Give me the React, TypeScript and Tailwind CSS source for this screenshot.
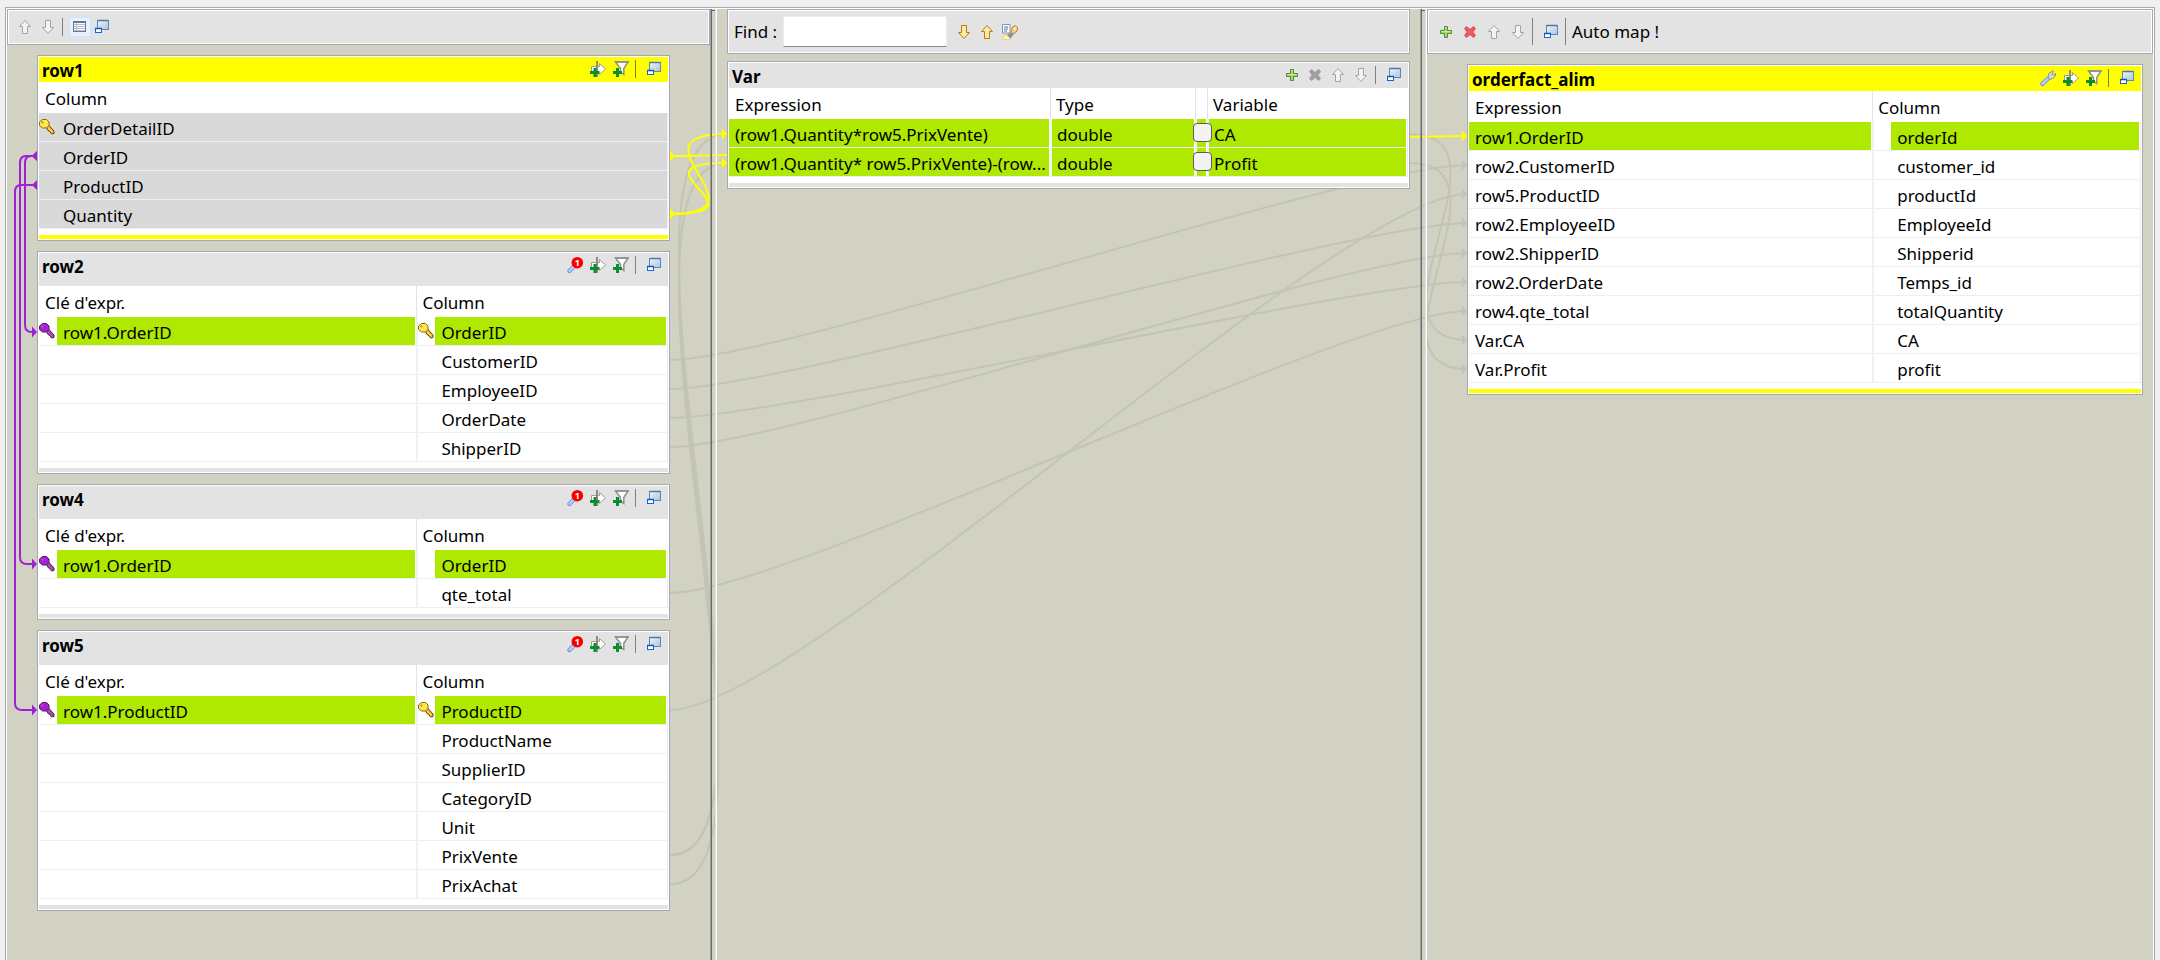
import type { ReactNode } from "react";

/* ---------- icons ---------- */

function Svg({ children, size = "size-4" }: { children: ReactNode; size?: string }) {
  return (
    <svg viewBox="0 0 16 16" className={`${size} block shrink-0`} aria-hidden="true">
      {children}
    </svg>
  );
}

const ARROW_UP = "M8 1.5 L13.5 7.5 L10.5 7.5 L10.5 14.5 L5.5 14.5 L5.5 7.5 L2.5 7.5 Z";
const ARROW_DOWN = "M8 14.5 L13.5 8.5 L10.5 8.5 L10.5 1.5 L5.5 1.5 L5.5 8.5 L2.5 8.5 Z";

function ArrowIcon({ dir, gold }: { dir: "up" | "down"; gold?: boolean }) {
  return (
    <Svg>
      <path
        d={dir === "up" ? ARROW_UP : ARROW_DOWN}
        fill={gold ? "#fde9a0" : "#f2f2f2"}
        stroke={gold ? "#b87a1e" : "#a3a3a3"}
        strokeLinejoin="round"
      />
    </Svg>
  );
}

function PlusIcon() {
  return (
    <Svg>
      <path
        d="M6.5 2.5h3v4h4v3h-4v4h-3v-4h-4v-3h4z"
        fill="#b9d34c"
        stroke="#3f8f52"
        strokeLinejoin="round"
      />
      <path d="M7 3.5h2M3.5 7.5h9" stroke="#dbe88c" />
    </Svg>
  );
}

function CrossIcon({ disabled }: { disabled?: boolean }) {
  return (
    <Svg>
      <path
        d="M2.5 4.5 L4.5 2.5 L8 5.5 L11.5 2.5 L13.5 4.5 L10.8 8 L13.5 11.5 L11.5 13.5 L8 10.5 L4.5 13.5 L2.5 11.5 L5.2 8 Z"
        fill={disabled ? "#a0a0a0" : "#f0595c"}
        stroke={disabled ? "#9a9a9a" : "#cf4a55"}
        strokeLinejoin="round"
      />
    </Svg>
  );
}

function RestoreIcon() {
  return (
    <Svg>
      <defs>
        <linearGradient id="pane" x1="0" y1="0" x2="1" y2="1">
          <stop offset="0" stopColor="#f4f4f2" />
          <stop offset="1" stopColor="#a9c4de" />
        </linearGradient>
      </defs>
      <rect x="3.5" y="1.5" width="11" height="9" fill="url(#pane)" stroke="#5a87bd" />
      <path d="M3.5 1.5h11" stroke="#4a78b5" strokeWidth="1.5" />
      <rect x="1.5" y="9.5" width="6" height="4" fill="#fff" stroke="#1565d0" />
      <path d="M1 9.5h7" stroke="#0b57c4" strokeWidth="1.5" />
    </Svg>
  );
}

function GridIcon() {
  return (
    <Svg>
      <rect x="1.5" y="2.5" width="12" height="10" fill="#fff" stroke="#6b7690" />
      <path d="M1 3h13" stroke="#6b7690" strokeWidth="2" />
      <path d="M2 5.5h11M2 7.5h11M2 9.5h11M4.5 4v8M2 11.5h11" stroke="#b5bccb" strokeWidth="1" />
    </Svg>
  );
}

function AddColumnIcon() {
  return (
    <Svg>
      <path d="M1.5 5.5h8v-3l6 5.5-6 5.5v-3h-8z" fill="#fff" stroke="#a29c8c" />
      <path d="M7 0v16" stroke="#8b8b8b" strokeWidth="2" />
      <path d="M5 7v9M0 11.5h9" stroke="#0a8f2c" strokeWidth="3" />
    </Svg>
  );
}

function AddFilterIcon() {
  return (
    <Svg>
      <path d="M2.5 1h12.5L10.8 7.5V13.5L7.5 11V7.5z" fill="#fff" stroke="#8f8f8f" strokeWidth="1.5" />
      <path d="M2 1h14" stroke="#8f8f8f" strokeWidth="1.5" />
      <path d="M4.5 7v9M0 11.5h9" stroke="#0a8f2c" strokeWidth="3" />
    </Svg>
  );
}

function WrenchIcon({ count }: { count?: number }) {
  return (
    <svg viewBox="0 0 16 16" className="block size-4 shrink-0 overflow-visible" aria-hidden="true">
      {count === undefined && (
        <path
          d="M8 8.5 L8.5 4 L12.5 0.8 L13.5 1.5 L12 4 L13.2 5.2 L15.6 3.5 L15.5 6 L12.5 8.5 L9.5 9.5 Z"
          fill="#d6d6d6"
          stroke="#8c8c8c"
        />
      )}
      <path d="M7.5 9 L2.4 14" stroke="#6c95d8" strokeWidth="4.4" strokeLinecap="round" />
      <path d="M7.5 9 L2.6 13.8" stroke="#b4cdf4" strokeWidth="2.6" strokeLinecap="round" />
      {count !== undefined && (
        <>
          <circle cx="10.3" cy="5.7" r="5.8" fill="#f80000" />
          <text
            x="10.3"
            y="9"
            fontSize="9"
            fontWeight="700"
            fontFamily="Noto Sans, sans-serif"
            textAnchor="middle"
            fill="#fff"
          >
            {count}
          </text>
        </>
      )}
    </svg>
  );
}

function FindTextIcon() {
  return (
    <Svg>
      <path d="M0.5 0.5h7.5v8.5h-7.5z" fill="#fff" stroke="#8291b5" />
      <path d="M2 3h4M2 5h4M2 7h3" stroke="#4f74b8" />
      <path d="M0.5 15.5 L2 11 L6 11.5 L8.5 15.5 Z" fill="#fff3bf" stroke="#e9c565" strokeWidth="0.7" />
      <path d="M5 11 L9 8 L11.5 10.5 L8.5 14.5 Z" fill="#8f8f9c" />
      <path d="M9 7 L10.5 3 L13.5 1.5 L15.7 3.5 L15 7 L11.5 10 Z" fill="#f6cf7c" stroke="#b9853a" />
      <path d="M12 4l1.5 1.5" stroke="#fff" strokeWidth="1.5" />
    </Svg>
  );
}

function KeyIcon({ tone }: { tone: "gold" | "purple" }) {
  const gold = tone === "gold";
  const fill = gold ? "#fce94a" : "#a421d6";
  const edge = gold ? "#8a6a12" : "#5b1a6e";
  const shaft = gold ? "#f5b524" : "#a83bb5";
  return (
    <Svg>
      <path
        d="M7 8 L9.5 6 L15 12 L15 14.5 L12.5 15 L11 12.5 L9.5 12 Z"
        fill={shaft}
        stroke={gold ? "#5e430c" : "#4d2a3c"}
        strokeLinejoin="round"
      />
      <path d="M9 8.5 L13.5 13.5" stroke={gold ? "#fff07a" : "#c05fc8"} />
      <path d="M3.5 .5h4l2.5 2.5v3.5l-2.5 2.5h-4l-3-2.5v-3.5z" fill={fill} stroke={edge} />
      <path d="M2 3.5h3M3.5 2v3" stroke={gold ? "#e39a3c" : "#c04a98"} />
    </Svg>
  );
}

/* ---------- controls ---------- */

function IconButton({ label, children }: { label: string; children: ReactNode }) {
  return (
    <button type="button" aria-label={label} title={label} className="block size-4 shrink-0">
      {children}
    </button>
  );
}

function Separator({ tall, dark }: { tall?: boolean; dark?: boolean }) {
  return (
    <div className="w-[17px] shrink-0 pl-1.5">
      <div className={`w-px ${tall ? "h-[27px]" : "h-[18px]"} ${dark ? "bg-[#7f7f2a]" : "bg-[#808080]"}`} />
    </div>
  );
}

const BAR = "flex border border-[#a7a9b0] bg-[#e3e3e3] shadow-[inset_0_0_0_1px_#fff] relative z-10";

/* ---------- mapping tables ---------- */

type Cell = {
  text?: string;
  icon?: "gold" | "purple";
  slot?: boolean;
  lit?: boolean;
  check?: string;
};

type MapTableProps = {
  name: string;
  columns: { label: string; width: string }[];
  rows: Cell[][];
  tools: ReactNode;
  selected?: boolean;
  roomy?: boolean;
  muted?: boolean;
};

function CellBody({ cell, first }: { cell: Cell; first: boolean }) {
  return (
    <div className="flex h-7">
      {cell.slot && (
        <span className={`${first ? "w-[18px]" : "w-[17px]"} shrink-0 pt-1.5`}>
          {cell.icon && <KeyIcon tone={cell.icon} />}
        </span>
      )}
      {cell.check ? (
        <span className="flex min-w-0 flex-1 items-start bg-[#afe800] pt-1">
          <input
            type="checkbox"
            aria-label={cell.check}
            className="relative z-10 -ml-1 size-[19px] shrink-0 appearance-none rounded-[4px] border border-[#5c5c5c] bg-[#f3f3f3]"
          />
        </span>
      ) : (
        <span
          className={`min-w-0 flex-1 truncate leading-8 ${first || cell.slot ? "pl-1.5" : "pl-[5px]"} ${cell.lit ? "bg-[#afe800]" : ""}`}
        >
          {cell.text}
        </span>
      )}
    </div>
  );
}

function MapTable({ name, columns, rows, tools, selected, roomy, muted }: MapTableProps) {
  const accent = selected ? "bg-[#ffff00]" : "bg-[#e3e3e3]";
  return (
    <section className="relative z-10 border border-[#a7a9b0] bg-white p-px">
      <header className={`flex items-start justify-between ${roomy ? "h-[33px]" : "h-[25px]"} ${accent}`}>
        <h2 className="pl-[3px] text-[17px] leading-7 font-bold">{name}</h2>
        <div className="flex pt-1 pr-1.5">{tools}</div>
      </header>
      <table className="w-full table-fixed border-separate border-spacing-0 text-left">
        <colgroup>
          {columns.map((c, i) => (
            <col key={i} className={c.width} />
          ))}
        </colgroup>
        <thead>
          <tr>
            {columns.map((c, i) => (
              <th
                key={i}
                className={`h-[31px] overflow-hidden p-0 font-normal whitespace-nowrap ${i > 0 ? "border-l border-[#e3e3e3]" : ""}`}
              >
                <div className={`h-[31px] leading-[34px] ${i > 0 ? "pl-[5px]" : "pl-1.5"}`}>{c.label}</div>
              </th>
            ))}
          </tr>
        </thead>
        <tbody>
          {rows.map((row, r) => (
            <tr key={r} className={muted ? "bg-[#d9d9d9]" : ""}>
              {row.map((cell, i) => (
                <td
                  key={i}
                  className={`h-[29px] border-b border-b-[#efefef] p-0 pr-px ${i > 0 ? "border-l-2 border-l-[#edf1fb]" : ""} ${i === row.length - 1 ? "border-r border-r-[#e6ebf5]" : ""}`}
                >
                  <CellBody cell={cell} first={i === 0} />
                </td>
              ))}
            </tr>
          ))}
        </tbody>
      </table>
      <div className={`mt-1.5 h-1 ${accent}`} />
    </section>
  );
}

function TableTools({ wrench, count, dark }: { wrench?: boolean; count?: number; dark?: boolean }) {
  return (
    <>
      <div className="flex gap-[7px]">
        {wrench && (
          <IconButton label="Settings">
            <WrenchIcon count={count} />
          </IconButton>
        )}
        <IconButton label="Add expression filter">
          <AddColumnIcon />
        </IconButton>
        <IconButton label="Add filter">
          <AddFilterIcon />
        </IconButton>
      </div>
      <div className="-mt-px">
        <Separator dark={dark} />
      </div>
      <IconButton label="Minimize">
        <RestoreIcon />
      </IconButton>
    </>
  );
}

const LOOKUP_COLUMNS = [
  { label: "Clé d'expr.", width: "w-[60%]" },
  { label: "Column", width: "w-[40%]" },
];

function lookupRows(expr: string, keyed: boolean, names: string[]): Cell[][] {
  return names.map((text, i) => [
    i === 0 ? { text: expr, icon: "purple", slot: true, lit: true } : { slot: true },
    { text, slot: true, lit: i === 0, icon: i === 0 && keyed ? "gold" : undefined },
  ]);
}

const OUTPUT_ROWS: [string, string][] = [
  ["row1.OrderID", "orderId"],
  ["row2.CustomerID", "customer_id"],
  ["row5.ProductID", "productId"],
  ["row2.EmployeeID", "EmployeeId"],
  ["row2.ShipperID", "Shipperid"],
  ["row2.OrderDate", "Temps_id"],
  ["row4.qte_total", "totalQuantity"],
  ["Var.CA", "CA"],
  ["Var.Profit", "profit"],
];

/* ---------- connectors ---------- */

type Link = [number, number, number, number];

const IDLE_LINKS: Link[] = [
  [670, 360, 1467, 165],
  [670, 389, 1467, 223],
  [670, 418, 1467, 282],
  [670, 447, 1467, 253],
  [670, 593, 1467, 311],
  [670, 710, 1467, 194],
  [670, 855, 727, 134],
  [670, 855, 727, 163],
  [670, 884, 727, 163],
  [1410, 134, 1467, 340],
  [1410, 163, 1467, 369],
];

const ACTIVE_LINKS: Link[] = [
  [670, 156, 1467, 136],
  [670, 214, 727, 134],
  [670, 214, 727, 163],
];

const JOINS: { x: number; from: number; to: number }[] = [
  { x: 25, from: 156, to: 332 },
  { x: 20, from: 156, to: 564 },
  { x: 15, from: 185, to: 710 },
];

function curve([x1, y1, x2, y2]: Link) {
  const pull = 100 + Math.abs(y2 - y1) * 0.055;
  return `M${x1} ${y1} C${x1 + pull} ${y1} ${x2 - pull} ${y2} ${x2} ${y2}`;
}

function head(x: number, y: number) {
  return `M${x - 5} ${y - 5.5} L${x} ${y} L${x - 5} ${y + 5.5} Z`;
}

function Connectors() {
  return (
    <svg
      viewBox="0 0 2160 960"
      preserveAspectRatio="none"
      className="pointer-events-none absolute top-0 left-0 h-[960px] w-full"
      aria-hidden="true"
    >
      <g fill="none" stroke="#c3c4b4" strokeWidth="2">
        {IDLE_LINKS.map((l, i) => (
          <path key={i} d={curve(l)} />
        ))}
      </g>
      <g fill="#c3c4b4">
        {IDLE_LINKS.map((l, i) => (
          <path key={i} d={head(l[2], l[3])} />
        ))}
      </g>
      <g fill="none" stroke="#ffff00" strokeWidth="2">
        {ACTIVE_LINKS.map((l, i) => (
          <path key={i} d={curve(l)} />
        ))}
      </g>
      <g fill="#ffff00">
        {ACTIVE_LINKS.map((l, i) => (
          <path key={i} d={head(l[2], l[3])} />
        ))}
        <path d={head(675, 156)} />
        <path d={head(675, 214)} />
      </g>
      <g fill="none" stroke="#9e22d4" strokeWidth="2">
        {JOINS.map((j) => (
          <path
            key={j.x}
            d={`M36 ${j.from} H${j.x + 6} Q${j.x} ${j.from} ${j.x} ${j.from + 7} V${j.to - 7} Q${j.x} ${j.to} ${j.x + 7} ${j.to} H34`}
          />
        ))}
      </g>
      <g fill="#9e22d4">
        {JOINS.map((j) => (
          <path key={j.x} d={`${head(37, j.to)} M37 ${j.from - 5} L32 ${j.from} L37 ${j.from + 5} Z`} />
        ))}
      </g>
    </svg>
  );
}

function Sash() {
  return (
    <div className="relative z-10 flex">
      <div className="w-px bg-[#a0a0a0]" />
      <div className="w-px bg-[#696969]" />
      <div className="mt-px flex-1 border-t border-[#696969]" />
      <div className="w-px bg-[#e3e3e3]" />
      <div className="w-px bg-white" />
    </div>
  );
}

/* ---------- page ---------- */

export default function App() {
  return (
    <div className="relative flex min-h-screen flex-col bg-[#f0f0f0] px-[5px] pt-[7px] font-['Noto_Sans','Open_Sans',sans-serif] text-[17px] text-black">
      <div className="flex flex-1 flex-col border border-b-0 border-[#a7a9b0] bg-white px-px pt-px">
        <main className="grid flex-1 grid-cols-[703fr_7px_703fr_7px_726fr] bg-[#d1d2c3]">
          <div className="min-w-0">
            <div className={`${BAR} h-9 items-center px-[9px]`}>
              <div className="flex gap-[7px]">
                <IconButton label="Move up">
                  <ArrowIcon dir="up" />
                </IconButton>
                <IconButton label="Move down">
                  <ArrowIcon dir="down" />
                </IconButton>
              </div>
              <div className="-mr-1">
                <Separator />
              </div>
              <button
                type="button"
                aria-label="Show columns"
                className="mr-[3px] flex h-5 w-[22px] items-center justify-center rounded-[2px] border border-[#c9e6fb] bg-[#e5f3ff]"
              >
                <GridIcon />
              </button>
              <IconButton label="Minimize all">
                <RestoreIcon />
              </IconButton>
            </div>
            <div className="flex flex-col gap-2.5 py-2.5 pr-10 pl-[30px]">
              <MapTable
                name="row1"
                selected
                muted
                tools={<TableTools dark />}
                columns={[{ label: "Column", width: "w-full" }]}
                rows={[
                  [{ text: "OrderDetailID", slot: true, icon: "gold" }],
                  [{ text: "OrderID", slot: true }],
                  [{ text: "ProductID", slot: true }],
                  [{ text: "Quantity", slot: true }],
                ]}
              />
              <MapTable
                name="row2"
                roomy
                tools={<TableTools wrench count={1} />}
                columns={LOOKUP_COLUMNS}
                rows={lookupRows("row1.OrderID", true, [
                  "OrderID",
                  "CustomerID",
                  "EmployeeID",
                  "OrderDate",
                  "ShipperID",
                ])}
              />
              <MapTable
                name="row4"
                roomy
                tools={<TableTools wrench count={1} />}
                columns={LOOKUP_COLUMNS}
                rows={lookupRows("row1.OrderID", false, ["OrderID", "qte_total"])}
              />
              <MapTable
                name="row5"
                roomy
                tools={<TableTools wrench count={1} />}
                columns={LOOKUP_COLUMNS}
                rows={lookupRows("row1.ProductID", true, [
                  "ProductID",
                  "ProductName",
                  "SupplierID",
                  "CategoryID",
                  "Unit",
                  "PrixVente",
                  "PrixAchat",
                ])}
              />
            </div>
          </div>

          <Sash />

          <div className="min-w-0 px-2.5">
            <div className={`${BAR} h-[45px] items-center pl-1.5`}>
              <label htmlFor="find" className="w-[49px] whitespace-nowrap">
                Find :
              </label>
              <input
                id="find"
                type="text"
                className="mr-[9px] h-[31px] w-[164px] border border-[#ededed] border-b-[#868686] bg-white px-1 outline-none"
              />
              <div className="flex gap-[7px]">
                <IconButton label="Find next">
                  <ArrowIcon dir="down" gold />
                </IconButton>
                <IconButton label="Find previous">
                  <ArrowIcon dir="up" gold />
                </IconButton>
                <IconButton label="Highlight all">
                  <FindTextIcon />
                </IconButton>
              </div>
            </div>
            <div className="pt-[7px]">
              <MapTable
                name="Var"
                tools={
                  <>
                    <div className="flex gap-[7px]">
                      <IconButton label="Add variable">
                        <PlusIcon />
                      </IconButton>
                      <IconButton label="Remove variable">
                        <CrossIcon disabled />
                      </IconButton>
                      <IconButton label="Move up">
                        <ArrowIcon dir="up" />
                      </IconButton>
                      <IconButton label="Move down">
                        <ArrowIcon dir="down" />
                      </IconButton>
                    </div>
                    <div className="-mt-px">
                      <Separator />
                    </div>
                    <IconButton label="Minimize">
                      <RestoreIcon />
                    </IconButton>
                  </>
                }
                columns={[
                  { label: "Expression", width: "w-[321px]" },
                  { label: "Type", width: "w-[145px]" },
                  { label: "", width: "w-3" },
                  { label: "Variable", width: "w-auto" },
                ]}
                rows={[
                  [
                    { text: "(row1.Quantity*row5.PrixVente)", lit: true },
                    { text: "double", lit: true },
                    { check: "CA nullable" },
                    { text: "CA", lit: true },
                  ],
                  [
                    {
                      text: "(row1.Quantity* row5.PrixVente)-(row...",
                      lit: true,
                    },
                    { text: "double", lit: true },
                    { check: "Profit nullable" },
                    { text: "Profit", lit: true },
                  ],
                ]}
              />
            </div>
          </div>

          <Sash />

          <div className="min-w-0">
            <div className={`${BAR} h-[45px] items-center px-2.5`}>
              <div className="flex gap-2">
                <IconButton label="Add output table">
                  <PlusIcon />
                </IconButton>
                <IconButton label="Remove output table">
                  <CrossIcon />
                </IconButton>
                <IconButton label="Move up">
                  <ArrowIcon dir="up" />
                </IconButton>
                <IconButton label="Move down">
                  <ArrowIcon dir="down" />
                </IconButton>
              </div>
              <Separator tall />
              <IconButton label="Minimize all">
                <RestoreIcon />
              </IconButton>
              <div className="-mr-1">
                <Separator tall />
              </div>
              <button type="button" className="whitespace-nowrap">
                Auto map !
              </button>
            </div>
            <div className="py-2.5 pr-2.5 pl-10">
              <MapTable
                name="orderfact_alim"
                selected
                tools={<TableTools wrench dark />}
                columns={[
                  { label: "Expression", width: "w-[60%]" },
                  { label: "Column", width: "w-[40%]" },
                ]}
                rows={OUTPUT_ROWS.map(([expr, column], i) => [
                  { text: expr, lit: i === 0 },
                  { text: column, slot: true, lit: i === 0 },
                ])}
              />
            </div>
          </div>
        </main>
      </div>
      <Connectors />
    </div>
  );
}
